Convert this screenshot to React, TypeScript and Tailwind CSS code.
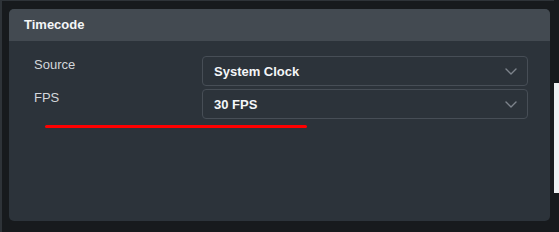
import React from "react";

function Chevron() {
  return (
    <svg width="12" height="7" viewBox="0 0 12 7" fill="none" className="shrink-0">
      <path d="M1 1L6 6L11 1" stroke="#7d848c" strokeWidth="1.4" strokeLinecap="round" strokeLinejoin="round" />
    </svg>
  );
}

function Select({ value }: { value: string }) {
  return (
    <div className="h-[30px] flex items-center justify-between pl-[11px] pr-[10px] rounded-[4px] border border-[#474e56] bg-[#2c333a]">
      <span className="text-[13px] font-bold text-[#f4f6f8] leading-none">{value}</span>
      <Chevron />
    </div>
  );
}

export default function App() {
  return (
    <div
      className="w-[559px] h-[232px] bg-[#171a1d] flex overflow-hidden"
      style={{ fontFamily: '"Liberation Sans", Arial, sans-serif' }}
    >
      <div className="w-[2px] bg-[#2e3338] shrink-0" />
      <div className="flex-1 flex flex-col">
        <div className="h-[1px] bg-[#2e3338]" />
        <div className="flex-1 pl-[7px] pr-[4px] pt-[8px] pb-[11px] flex">
          <div className="flex-1 rounded-[5px] overflow-hidden flex flex-col bg-[#2c333a]">
            <div className="h-[32px] bg-[#434a51] flex items-center pl-[15px]">
              <span className="text-[13px] font-bold text-[#f4f6f8]">Timecode</span>
            </div>
            <div className="flex-1 pt-[15px] pl-[25px] pr-[22px]">
              <div className="grid grid-cols-[168px_1fr] gap-y-[3px]">
                <div className="text-[13px] text-[#d3d7db] leading-[16px] pt-[1px]">Source</div>
                <Select value="System Clock" />
                <div className="text-[13px] text-[#d3d7db] leading-[16px] pt-[1px]">FPS</div>
                <Select value="30 FPS" />
              </div>
              <div className="mt-[6px] ml-[11px] w-[262px] h-[3px] rounded-full bg-[#ff0000]" />
            </div>
          </div>
        </div>
      </div>
      <div className="w-[5px] shrink-0 flex flex-col">
        <div className="h-[83px]" />
        <div className="h-[110px] bg-[#eef0f2]" />
      </div>
    </div>
  );
}
